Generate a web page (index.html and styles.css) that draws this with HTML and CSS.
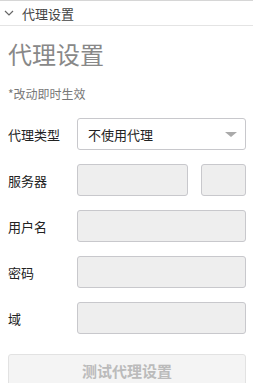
FILE: index.html
```html
<!DOCTYPE html>
<html lang="zh-CN">
<head>
    <meta charset="UTF-8">
    <meta name="viewport" content="width=device-width, initial-scale=1.0">
    <title>代理设置</title>
    <link rel="stylesheet" href="styles.css">
</head>
<body>
    <div class="section-head">
        <svg class="chevron" width="10" height="6" viewBox="0 0 10 6">
            <path d="M1 1 L5 5 L9 1" fill="none" stroke="#666" stroke-width="1.2"/>
        </svg>
        <span>代理设置</span>
    </div>
    <div class="panel">
        <h1 class="title">代理设置</h1>
        <p class="hint">*改动即时生效</p>
        <div class="form">
            <label>代理类型</label>
            <div class="select">
                <span>不使用代理</span>
                <span class="arrow"></span>
            </div>

            <label>服务器</label>
            <div class="server">
                <input type="text" class="host" disabled>
                <input type="text" class="port" disabled>
            </div>

            <label>用户名</label>
            <input type="text" disabled>

            <label>密码</label>
            <input type="password" disabled>

            <label>域</label>
            <input type="text" disabled>
        </div>
        <button class="test-btn" disabled>测试代理设置</button>
    </div>
</body>
</html>
```

FILE: styles.css
```css
body {
    margin: 0;
    padding: 0;
    background-color: #fff;
    font-family: "Noto Sans CJK SC", "Noto Sans", sans-serif;
    color: #333;
}
.section-head {
    display: flex;
    align-items: center;
    height: 24px;
    border-top: 1px solid #d6d6d6;
    border-bottom: 1px solid #e4e4e4;
    font-size: 13px;
    color: #444;
}
.section-head .chevron {
    margin: 0 8px 0 4px;
}
.panel {
    padding: 0 7px 0 8px;
}
.title {
    margin: 11px 0 0 0;
    font-size: 24px;
    line-height: 34px;
    font-weight: normal;
    color: #888;
}
.hint {
    margin: 15px 0 0 0;
    font-size: 12px;
    line-height: 16px;
    color: #777;
}
.form {
    display: grid;
    grid-template-columns: 69px 1fr;
    row-gap: 14px;
    align-items: center;
    margin-top: 16px;
}
.form label {
    font-size: 13px;
    color: #222;
}
.form input {
    box-sizing: border-box;
    height: 32px;
    width: 100%;
    margin: 0;
    background-color: #eee;
    border: 1px solid #c8c8cc;
    border-radius: 3px;
}
.select {
    box-sizing: border-box;
    height: 32px;
    display: flex;
    align-items: center;
    justify-content: space-between;
    padding: 0 8px 0 10px;
    border: 1px solid #c8c8cc;
    border-radius: 3px;
    background-color: #fff;
    font-size: 13px;
    color: #222;
}
.select .arrow {
    width: 0;
    height: 0;
    border-left: 6px solid transparent;
    border-right: 6px solid transparent;
    border-top: 5px solid #aaa;
}
.server {
    display: flex;
    gap: 13px;
}
.server .port {
    width: 45px;
    flex: none;
}
.test-btn {
    display: block;
    box-sizing: border-box;
    width: 100%;
    height: 32px;
    margin-top: 20px;
    background-color: #f4f4f4;
    border: 1px solid #e2e2e2;
    border-radius: 3px;
    font-family: inherit;
    font-size: 15px;
    font-weight: bold;
    color: #bbb;
}
```
